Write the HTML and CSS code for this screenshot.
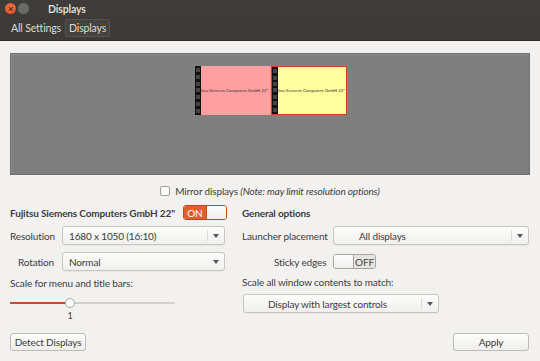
FILE: index.html
```html
<!DOCTYPE html>
<html lang="en">
<head>
<meta charset="utf-8">
<title>Displays</title>
<link rel="stylesheet" href="styles.css">
</head>
<body>
<div class="titlebar">
    <span class="wbtn close">×</span>
    <span class="wbtn mini"></span>
    <span class="title">Displays</span>
</div>
<div class="toolbar">
    <span class="crumb">All Settings</span>
    <span class="crumb active">Displays</span>
</div>
<div class="main">
    <div class="preview">
        <div class="monitors">
            <div class="mon pink">
                <div class="strip"><i></i><i></i><i></i><i></i><i></i><i></i><i></i></div>
                <span class="mname">Fujitsu Siemens Computers GmbH 22"</span>
            </div>
            <div class="mon yellow">
                <div class="strip"><i></i><i></i><i></i><i></i><i></i><i></i><i></i></div>
                <span class="mname">Fujitsu Siemens Computers GmbH 22"</span>
            </div>
        </div>
    </div>
    <div class="mirror">
        <span class="check"></span>
        <span>Mirror displays <em>(Note: may limit resolution options)</em></span>
    </div>
    <div class="cols">
        <div class="col left">
            <div class="row head">
                <b>Fujitsu Siemens Computers GmbH 22"</b>
                <span class="switch on"><span class="st">ON</span><span class="knob"></span></span>
            </div>
            <div class="row">
                <span class="lbl">Resolution</span>
                <span class="combo w163"><span class="ctext">1680 x 1050 (16:10)</span><span class="sep"></span><span class="arrow"></span></span>
            </div>
            <div class="row">
                <span class="lbl r">Rotation</span>
                <span class="combo w163"><span class="ctext">Normal</span><span class="arrow"></span></span>
            </div>
            <div class="plain">Scale for menu and title bars:</div>
            <div class="slider">
                <span class="fill"></span>
                <span class="thumb"></span>
            </div>
            <div class="val">1</div>
            <div class="btns">
                <span class="btn detect">Detect Displays</span>
            </div>
        </div>
        <div class="col right">
            <div class="row head"><b>General options</b></div>
            <div class="row">
                <span class="lbl wide">Launcher placement</span>
                <span class="combo w196"><span class="ctext center">All displays</span><span class="sep"></span><span class="arrow"></span></span>
            </div>
            <div class="row sticky">
                <span class="lbl wide r">Sticky edges</span>
                <span class="switch off"><span class="knob"></span><span class="st">OFF</span></span>
            </div>
            <div class="plain">Scale all window contents to match:</div>
            <div class="row scale">
                <span class="combo w196"><span class="ctext center2">Display with largest controls</span><span class="sep"></span><span class="arrow"></span></span>
            </div>
            <div class="btns end">
                <span class="btn apply">Apply</span>
            </div>
        </div>
    </div>
</div>
</body>
</html>
```

FILE: styles.css
```css
*{ box-sizing: border-box; }
body{ margin: 0; padding: 0; width: 540px; height: 361px; overflow: hidden; white-space: nowrap;
    background: #f2f1f0; font-family: Lato, "Noto Sans", sans-serif; font-size: 10px; letter-spacing: -0.15px; color: #3c3c3c; }

.titlebar{ height: 17px; background: #3d3c38; display: flex; align-items: center; padding-left: 5px; }
.wbtn{ width: 11px; height: 11px; border-radius: 50%; margin-right: 2px; display: inline-block; }
.wbtn.close{ background: radial-gradient(circle at 50% 40%, #f47a4c, #d9481f); color: #5a2010;
    font-size: 10px; line-height: 10px; text-align: center; font-weight: bold; }
.wbtn.mini{ background: #6b6a65; }
.title{ color: #dfdbd2; font-weight: bold; font-size: 10.5px; margin-left: 17px; }

.toolbar{ height: 24px; background: #3c3b37; display: flex; align-items: center; padding: 0 0 1px 10px;
    border-bottom: 1px solid #2c2b28; }
.crumb{ color: #dfdbd2; padding: 2px 3px; border: 1px solid transparent; border-radius: 2px; font-size: 10.5px; }
.crumb:first-child{ margin-left: -3px; padding-right: 2px; }
.crumb.active{ border-color: #56544f; background: #44433e; margin-left: 1px; }

.main{ padding: 12px 10px 0 10px; }
.preview{ height: 122px; background: #7f7f7f; border: 1px solid #6f6f6f;
    box-shadow: inset 1px 1px 0 #8c8c8c; display: flex; justify-content: center; padding-top: 12px; }
.monitors{ display: flex; margin-left: 1px; }
.mon{ width: 76px; height: 49px; display: flex; align-items: center; overflow: hidden; }
.mon.pink{ background: #ffa0a0; }
.mon.yellow{ background: #ffff9f; border: 1px solid #c6461f; box-shadow: 0 0 1px #e06030; }
.strip{ width: 6px; height: 100%; background: #111; display: flex; flex-direction: column; justify-content: space-around; padding: 1px; flex: none; position: relative; z-index: 1; }
.strip i{ display: block; height: 4px; background: #444; }
.mname{ font-size: 4.3px; letter-spacing: 0; white-space: nowrap; color: #333; margin-left: -5px; }

.mirror{ display: flex; align-items: center; justify-content: center; height: 28px; padding: 3px 0 0 0; }
.check{ width: 10px; height: 10px; border: 1px solid #a09e9a; border-radius: 2px; background: #fbfbfa; margin-right: 5px; }
.mirror em{ font-style: italic; }

.cols{ display: grid; grid-template-columns: 217px 287px; column-gap: 15px; }
.col{ display: flex; flex-direction: column; }
.row{ display: flex; align-items: center; }
.row.head{ height: 15px; margin-top: 2px; }
.row.head b{ color: #3c3c3c; margin-right: 8px; }
.left .row, .right .row{ margin-bottom: 7px; }
.left .row.head, .right .row.head{ margin-bottom: 6px; }
.right .row.sticky{ margin-top: 2px; }
.lbl{ width: 52px; flex: none; }
.lbl.r{ padding-left: 8px; }
.lbl.wide{ width: 91px; }
.right .lbl.r{ padding-left: 32px; }

.combo{ height: 19px; border: 1px solid #c7c5c0; border-radius: 3px; background: linear-gradient(#fdfdfc, #f0efed);
    display: flex; align-items: center; box-shadow: 0 1px 0 rgba(0,0,0,0.04); flex: none; }
.combo.w163{ width: 163px; }
.combo.w196{ width: 196px; }
.ctext{ flex: 1; padding-left: 6px; }
.ctext.center{ padding-left: 25px; }
.ctext.center2{ padding-left: 24px; }
.sep{ width: 1px; height: 11px; background: #dcdad6; }
.arrow{ width: 16px; display: flex; justify-content: center; }
.arrow::after{ content: ""; border-left: 3px solid transparent; border-right: 3px solid transparent; border-top: 4px solid #555; }

.switch{ height: 15px; width: 44px; border: 1px solid #a6a4a0; border-radius: 3px; display: flex; overflow: hidden; flex: none; }
.switch .st{ width: 22px; display: flex; align-items: center; justify-content: center; }
.switch .knob{ flex: 1; background: linear-gradient(#fefefe, #efeeec); }
.switch.on{ border-color: #b84a1d; }
.switch.on .st{ background: #e0602b; color: #fff; }
.switch.on .knob{ border-left: 1px solid #c05020; }
.switch.off{ width: 43px; }
.switch.off .st{ background: #e5e4e1; color: #444; border-left: 1px solid #a6a4a0; }

.plain{ height: 14px; margin-top: 0; }
.left .plain{ margin-top: -1px; }
.slider{ height: 12px; width: 165px; margin-top: 6px; position: relative; }
.slider::before{ content: ""; position: absolute; left: 0; right: 0; top: 5px; height: 2px; background: #d2d0cc; border-radius: 1px; }
.fill{ position: absolute; left: 0; top: 5px; height: 2px; width: 60px; background: #c84e2a; }
.thumb{ position: absolute; left: 55px; top: 1px; width: 10px; height: 10px; border-radius: 50%; background: #fbfbfa; border: 1px solid #a9a7a3; }
.val{ width: 120px; text-align: center; font-size: 9px; margin-top: 1px; height: 14px; }

.row.scale{ margin-top: 4px; margin-left: 1px; }
.btns{ display: flex; margin-top: 9px; }
.right .btns{ margin-top: 13px; }
.btns.end{ justify-content: flex-end; }
.btn{ height: 18px; border: 1px solid #bdbbb6; border-radius: 3px; background: linear-gradient(#fdfdfc, #efeeec);
    display: flex; align-items: center; justify-content: center; }
.btn.detect, .btn.apply{ width: 76px; }
```
